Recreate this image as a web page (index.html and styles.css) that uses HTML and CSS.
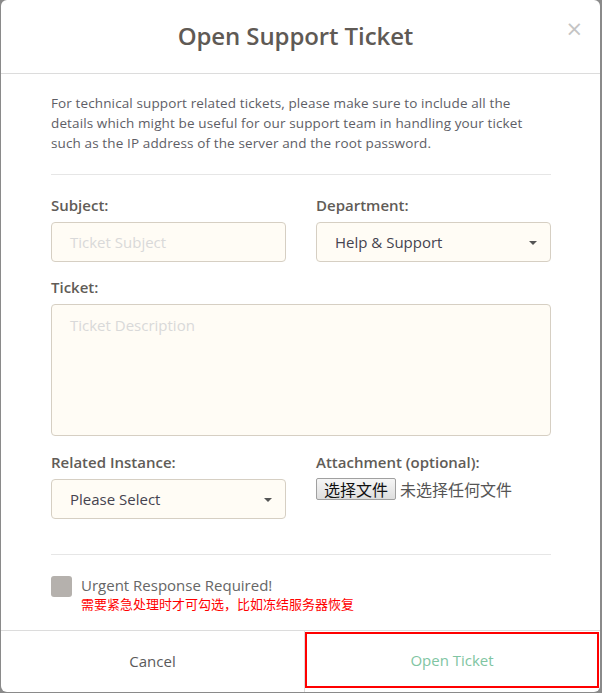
FILE: index.html
```html
<!DOCTYPE html>
<html lang="en">
<head>
<meta charset="utf-8">
<title>Open Support Ticket</title>
<link rel="stylesheet" href="styles.css">
</head>
<body>
<div class="modal">
  <div class="modal-header">
    <h2 class="modal-title">Open Support Ticket</h2>
    <span class="close">&times;</span>
  </div>
  <div class="modal-body">
    <p class="intro">For technical support related tickets, please make sure to include all the details which might be useful for our support team in handling your ticket such as the IP address of the server and the root password.</p>
    <div class="divider"></div>
    <div class="row">
      <div class="field">
        <label class="label">Subject:</label>
        <div class="control placeholder">Ticket Subject</div>
      </div>
      <div class="field">
        <label class="label">Department:</label>
        <div class="control select">Help &amp; Support<span class="caret"></span></div>
      </div>
    </div>
    <div class="field full">
      <label class="label">Ticket:</label>
      <div class="control textarea placeholder">Ticket Description</div>
    </div>
    <div class="row row-last">
      <div class="field">
        <label class="label">Related Instance:</label>
        <div class="control select">Please Select<span class="caret"></span></div>
      </div>
      <div class="field">
        <label class="label">Attachment (optional):</label>
        <div class="file">
          <span class="file-btn">选择文件</span>
          <span class="file-name">未选择任何文件</span>
        </div>
      </div>
    </div>
    <div class="divider divider-2"></div>
    <div class="urgent">
      <span class="checkbox"></span>
      <div class="urgent-text">
        <div class="urgent-title">Urgent Response Required!</div>
        <div class="urgent-note">需要紧急处理时才可勾选，比如冻结服务器恢复</div>
      </div>
    </div>
  </div>
  <div class="modal-footer">
    <div class="btn btn-cancel">Cancel</div>
    <div class="btn btn-open">Open Ticket</div>
  </div>
</div>
</body>
</html>
```
FILE: styles.css
```css
* { box-sizing: border-box; }
html, body { margin: 0; padding: 0; }
body {
  background: #8a8a8a;
  font-family: "Open Sans", "Noto Sans", sans-serif;
  width: 602px;
  height: 693px;
  overflow: hidden;
}
.modal {
  margin: 0 2px 0 1px;
  width: 599px;
  height: 692px;
  background: #fff;
  border-radius: 6px;
  overflow: hidden;
  display: flex;
  flex-direction: column;
}
.modal-header {
  position: relative;
  height: 74px;
  border-bottom: 1px solid #dcdcdc;
  display: flex;
  align-items: center;
  justify-content: center;
}
.modal-title {
  margin: 0 0 2px -10px;
  font-size: 24px;
  font-weight: 600;
  color: #5f5a55;
  letter-spacing: -0.1px;
}
.close {
  position: absolute;
  right: 17px;
  top: 16px;
  font-size: 21px;
  color: #c4c4c4;
  font-family: "DejaVu Sans", sans-serif;
  line-height: 26px;
}
.modal-body {
  flex: 1;
  padding: 19px 49px 0 50px;
}
.intro {
  margin: 0;
  font-size: 13.5px;
  letter-spacing: 0.12px;
  line-height: 20px;
  color: #5e5e66;
}
.divider {
  height: 1px;
  background: #e6e6e6;
  margin-top: 21px;
  margin-bottom: 20px;
}
.divider-2 { margin-top: 35px; margin-bottom: 21px; }
.row {
  display: grid;
  grid-template-columns: 1fr 1fr;
  column-gap: 30px;
  margin-bottom: 15px;
}
.row-last { margin-bottom: 0; }
.field.full { margin-bottom: 16px; }
.label {
  display: block;
  font-size: 15px;
  line-height: 20px;
  font-weight: 600;
  color: #615c57;
  margin-bottom: 7px;
}
.control {
  position: relative;
  height: 40px;
  border: 1px solid #d6cfc3;
  border-radius: 4px;
  background: #fffcf5;
  padding: 0 18px;
  display: flex;
  align-items: center;
  font-size: 15px;
  line-height: 20px;
  padding-bottom: 1px;
  color: #45434f;
}
.placeholder { color: #d9d9d9; }
.textarea {
  height: 132px;
  align-items: flex-start;
  padding-top: 10px;
}
.caret {
  position: absolute;
  right: 13px;
  top: 18px;
  width: 0;
  height: 0;
  border-left: 4px solid transparent;
  border-right: 4px solid transparent;
  border-top: 4px solid #555;
}
.file {
  display: flex;
  align-items: center;
  margin-top: -2px;
  font-family: "Noto Sans CJK SC", sans-serif;
  font-size: 16px;
}
.file-btn {
  height: 22px;
  line-height: 20px;
  padding: 0 7px;
  border: 1px solid #a0a0a0;
  border-radius: 2px;
  background: linear-gradient(#f6f6f6, #dedede);
  color: #111;
}
.file-name {
  margin-left: 4px;
  color: #555;
}
.urgent {
  display: flex;
  align-items: flex-start;
}
.checkbox {
  width: 21px;
  height: 21px;
  border-radius: 3px;
  background: #b5b1ad;
  margin-right: 9px;
  flex: none;
}
.urgent-title {
  font-size: 15px;
  line-height: 19px;
  color: #666;
}
.urgent-note {
  font-family: "Noto Sans CJK SC", sans-serif;
  font-size: 13px;
  line-height: 18px;
  color: #ff0000;
}
.modal-footer {
  height: 62px;
  border-top: 1px solid #dcdcdc;
  display: flex;
}
.btn {
  flex: 1;
  display: flex;
  align-items: center;
  justify-content: center;
  font-size: 15px;
}
.btn-cancel {
  color: #5a5a5a;
  border-right: 1px solid #dcdcdc;
  flex: 0 0 304px;
  padding-bottom: 2px;
}
.btn-open {
  color: #80c5a2;
  border: 2px solid #ff0000;
  margin: 1px 1px 4px 0;
}
```
